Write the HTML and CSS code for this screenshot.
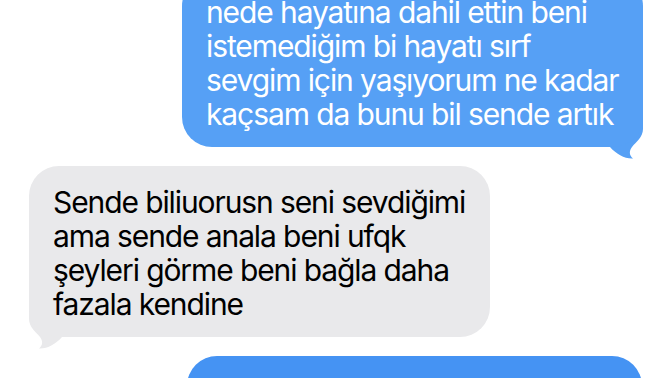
FILE: index.html
```html
<!DOCTYPE html>
<html lang="tr">
<head>
    <meta charset="UTF-8">
    <meta name="viewport" content="width=device-width, initial-scale=1.0">
    <title>Mesajlar</title>
    <link rel="stylesheet" href="styles.css">
</head>
<body>
    <div class="chat">
        <div class="bubble sent">
            nede hayatına dahil ettin beni<br>
            istemediğim bi hayatı sırf<br>
            sevgim için yaşıyorum ne kadar<br>
            kaçsam da bunu bil sende artık
            <svg class="tail" viewBox="0 0 36 42" width="36" height="42"><path d="M0 0H36V12C36 20 29 25 25 30C22 34 22 38 26 41.5C18 42 9 37 3 30H0Z"/></svg>
        </div>
        <div class="bubble received">
            Sende biliuorusn seni sevdiğimi<br>
            ama sende anala beni ufqk<br>
            şeyleri görme beni bağla daha<br>
            fazala kendine
            <svg class="tail" viewBox="0 0 36 42" width="36" height="42"><path d="M0 0H36V12C36 20 29 25 25 30C22 34 22 38 26 41.5C18 42 9 37 3 30H0Z"/></svg>
        </div>
        <div class="bubble sent next">&nbsp;</div>
    </div>
</body>
</html>
```
FILE: styles.css
```css
body {
    margin: 0;
    background: #ffffff;
    font-family: Inter, "Noto Sans", sans-serif;
    overflow: hidden;
    height: 378px;
}
.chat {
    display: flex;
    flex-direction: column;
    gap: 19px;
    margin-top: -24px;
    padding: 0 29px;
}
.bubble {
    position: relative;
    width: 461px;
    box-sizing: border-box;
    padding: 19px 24px 16px;
    border-radius: 30px;
    font-size: 30px;
    line-height: 34px;
    letter-spacing: -1.1px;
    white-space: nowrap;
}
.sent {
    align-self: flex-end;
    background: #56a0f5;
    color: #ffffff;
}
.received {
    align-self: flex-start;
    background: #e9e9eb;
    color: #000000;
}
.next {
    width: 455px;
    margin-right: 1px;
    height: 80px;
    background: #4593f3;
}
/* tail sits behind the bubble so it never covers the text */
.tail {
    position: absolute;
    top: calc(100% - 30px);
    z-index: -1;
    display: block;
}
.sent .tail {
    right: 0;
    fill: #56a0f5;
}
.received .tail {
    left: 0;
    fill: #e9e9eb;
    transform: scaleX(-1);
}
```
